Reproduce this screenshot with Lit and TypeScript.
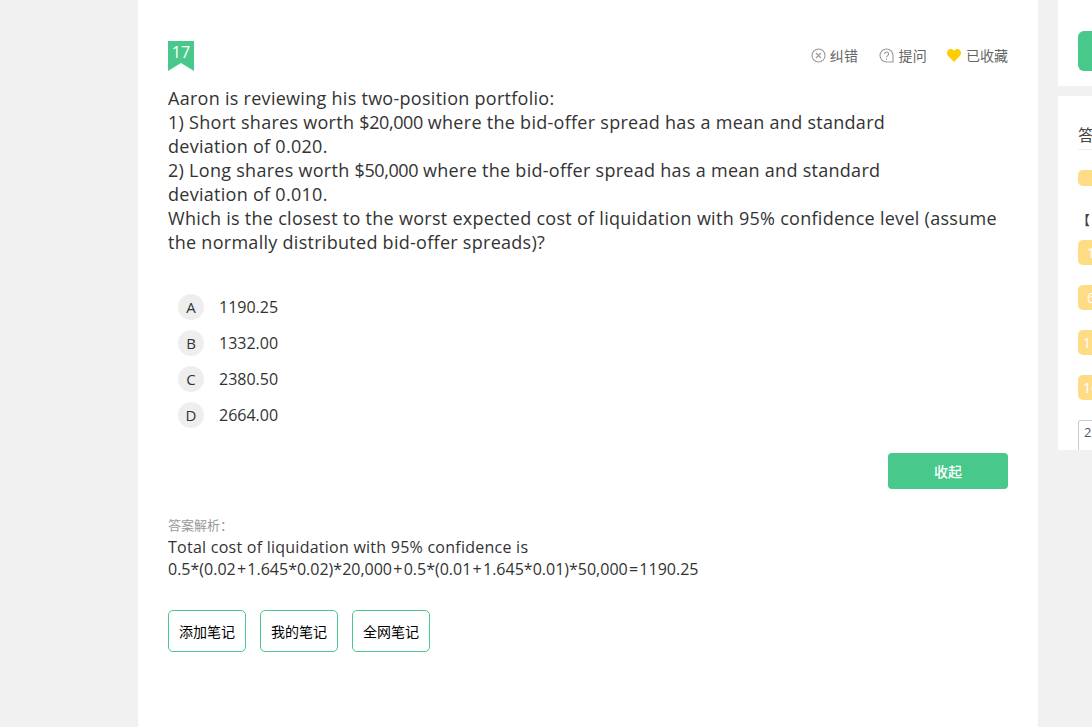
import { LitElement, html, css } from "lit";
import { customElement } from "lit/decorators.js";

@customElement("app-root")
export class AppRoot extends LitElement {
  static styles = css`
    :host { display: block; width: 1092px; height: 727px; overflow: hidden; background: #f1f1f1; font-family: "Open Sans", "Noto Sans CJK SC", sans-serif; color: #333; }
    .page { display: flex; align-items: flex-start; height: 727px; padding-left: 138px; gap: 20px; box-sizing: border-box; }
    .main { width: 900px; height: 727px; flex: none; background: #fff; padding: 41px 30px 0; box-sizing: border-box; }
    .head { display: flex; justify-content: space-between; align-items: flex-start; }
    .flag { width: 26px; height: 30px; background: #48c98b; color: #fff; font-size: 16px; line-height: 22px; text-align: center; clip-path: polygon(0 0, 100% 0, 100% 100%, 50% 73%, 0 100%); }
    .tools { display: flex; gap: 20px; padding-top: 5px; font-size: 14px; line-height: 19px; color: #666; }
    .tool { display: flex; align-items: center; gap: 4px; letter-spacing: 0.3px; }
    .tool.first { margin-right: 1px; }
    .tool.fav { gap: 5px; letter-spacing: 0; }
    .tool svg { display: block; flex: none; }
    .q { margin-top: 15px; font-size: 18px; line-height: 24px; color: #333; letter-spacing: 0.28px; }
    .n { letter-spacing: -0.4px; }
    .opts { margin-top: 40px; padding-left: 10px; display: flex; flex-direction: column; gap: 10px; }
    .opt { display: flex; align-items: center; gap: 15px; font-size: 16px; height: 26px; }
    .letter { width: 26px; height: 26px; border-radius: 50%; background: #eee; font-size: 15px; display: flex; align-items: center; justify-content: center; }
    .actions { display: flex; justify-content: flex-end; margin-top: 25px; }
    .collapse { width: 120px; height: 36px; border-radius: 4px; background: #48c98b; color: #fff; font-size: 14px; font-weight: 500; display: flex; align-items: center; justify-content: center; }
    .label { margin-top: 27px; font-size: 13px; line-height: 18px; color: #999; }
    .exp { font-size: 16px; line-height: 22px; margin-top: 2px; color: #333; }
    .l1 { letter-spacing: 0.25px; }
    .op { margin: 0 1.25px; }
    .notes { display: flex; gap: 14px; margin-top: 30px; }
    .note { width: 78px; height: 42px; box-sizing: border-box; border: 1px solid #48c98b; border-radius: 5px; color: #000; font-size: 14px; display: flex; align-items: center; justify-content: center; }
    .side { width: 34px; flex: none; display: flex; flex-direction: column; gap: 10px; overflow: hidden; }
    .card { background: #fff; padding-left: 20px; box-sizing: border-box; width: 100%; }
    .c1 { height: 86px; padding-top: 31px; }
    .btn { width: 60px; height: 40px; border-radius: 6px; background: #48c98b; }
    .c2 { height: 354px; padding-top: 28px; }
    .title { font-size: 16px; line-height: 22px; white-space: nowrap; height: 24px; color: #444; width: 60px; }
    .rule { width: 60px; height: 1px; background: #eee; margin-top: 1px; }
    .chip { width: 28px; background: #fddc85; border-radius: 5px; color: #fff; font-size: 14px; box-sizing: border-box; padding-right: 2px; display: flex; align-items: center; justify-content: center; white-space: nowrap; }
    .small { height: 16px; margin-top: 20px; }
    .bracket { font-size: 13px; line-height: 18px; margin-top: 25px; margin-left: -1px; font-weight: 700; color: #444; height: 18px; }
    .chips { display: flex; flex-direction: column; gap: 20px; margin-top: 11px; }
    .chip.big { height: 25px; }
    .page-in { width: 60px; height: 30px; margin-top: 20px; box-sizing: border-box; border: 1px solid #ccc; border-bottom: 0; border-radius: 3px 3px 0 0; font-size: 13px; line-height: 22px; padding-left: 5px; color: #555; white-space: nowrap; }
  `;

  render() {
    const opts = [["A", "1190.25"], ["B", "1332.00"], ["C", "2380.50"], ["D", "2664.00"]];
    return html`<div class="page">
      <div class="main">
        <div class="head">
          <div class="flag">17</div>
          <div class="tools">
            <div class="tool first">
              <svg width="15" height="15" viewBox="0 0 15 15" fill="none" stroke="#999" stroke-width="1.1"><circle cx="7.500" cy="7.500" r="6.500"/><path d="M5 5l5 5M10 5l-5 5"/></svg>
              纠错
            </div>
            <div class="tool">
              <svg width="15" height="15" viewBox="0 0 15 15" fill="none" stroke="#999" stroke-width="1.1"><path d="M7.500 1a6.500 6.500 0 1 0 0 13h6.500V7.500A6.500 6.500 0 0 0 7.500 1z"/><path d="M5.600 6a2 2 0 1 1 3 1.700c-.7.4-1.100.8-1.100 1.600"/><path d="M7.500 10.500v1.200"/></svg>
              提问
            </div>
            <div class="tool fav">
              <svg width="14" height="13" viewBox="0 0 14 13" fill="#fc0"><path d="M7 13L1 6.800C-.6 5-.2 2.300 1.300 1 3-.4 5.600-.2 7 2c1.400-2.200 4-2.400 5.700-1 1.500 1.300 1.900 4 .3 5.800z"/></svg>
              已收藏
            </div>
          </div>
        </div>
        <div class="q">Aaron is reviewing his two-position portfolio:<br>1) Short shares worth <span class="n">$20,000</span> where the bid-offer spread has a mean and standard<br>deviation of 0.020.<br>2) Long shares worth <span class="n">$50,000</span> where the bid-offer spread has a mean and standard<br>deviation of 0.010.<br>Which is the closest to the worst expected cost of liquidation with 95% confidence level (assume<br>the normally distributed bid-offer spreads)?</div>
        <div class="opts">
          ${opts.map(([l, v]) => html`<div class="opt"><span class="letter">${l}</span><span>${v}</span></div>`)}
        </div>
        <div class="actions"><div class="collapse">收起</div></div>
        <div class="label">答案解析：</div>
        <div class="exp"><span class="l1">Total cost of liquidation with 95% confidence is</span><br>0.5*(0.02<span class="op">+</span>1.645*0.02)*20,000<span class="op">+</span>0.5*(0.01<span class="op">+</span>1.645*0.01)*50,000<span class="op">=</span>1190.25</div>
        <div class="notes">
          <div class="note">添加笔记</div><div class="note">我的笔记</div><div class="note">全网笔记</div>
        </div>
      </div>
      <div class="side">
        <div class="card c1"><div class="btn"></div></div>
        <div class="card c2">
          <div class="title">答题卡</div>
          <div class="rule"></div>
          <div class="chip small"></div>
          <div class="bracket">【</div>
          <div class="chips">
            ${["1", "6", "11", "16"].map((n) => html`<div class="chip big">${n}</div>`)}
          </div>
          <div class="page-in">2</div>
        </div>
      </div>
    </div>`;
  }
}
